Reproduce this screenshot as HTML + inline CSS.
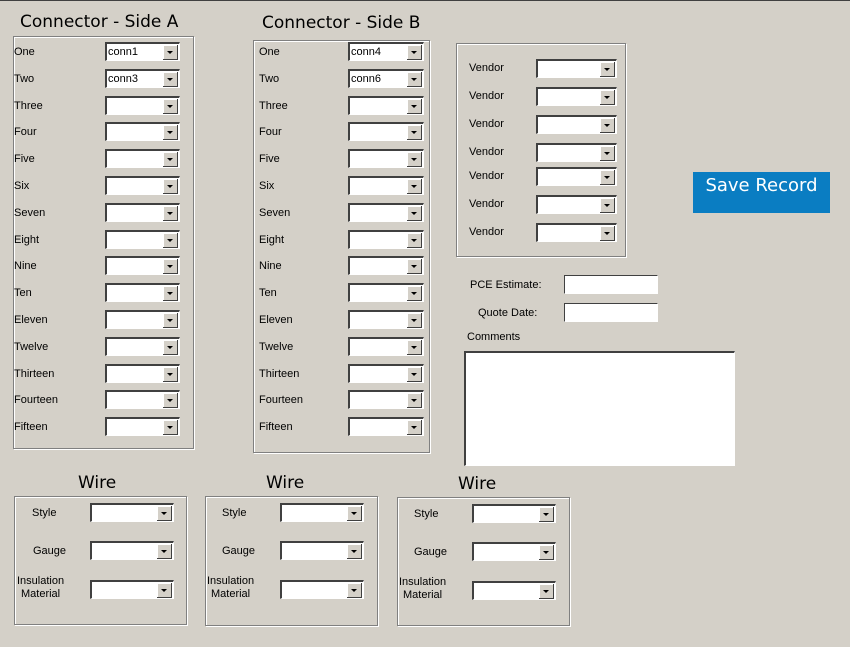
<!DOCTYPE html>
<html><head><style>
body{margin:0;width:850px;height:647px;background:#d4d0c8;position:relative;overflow:hidden;font-family:"Liberation Sans",sans-serif;font-size:11px;color:#000}
.top{position:absolute;left:0;top:0;width:850px;height:1px;background:#404040}
.g{position:absolute;border:1px solid #808080;box-shadow:inset 1px 1px 0 #fff,1px 1px 0 #fff}
.t{position:absolute;font-size:17px;white-space:nowrap;font-family:"DejaVu Sans",sans-serif}
.l{position:absolute;white-space:nowrap;font-size:11px;margin-top:1px}
.c{position:absolute;height:16px;background:#fff;border-top:2px solid #404040;border-left:2px solid #404040;border-right:1px solid #fff;border-bottom:1px solid #fff;box-sizing:content-box;font-size:11px;line-height:16px;padding-left:1px}
.c::after{content:"";position:absolute;right:1px;top:1px;width:14px;height:14px;background:#d4d0c8;border-right:1px solid #404040;border-bottom:1px solid #404040;box-shadow:inset 1px 1px 0 #fff}
.c::before{content:"";position:absolute;right:6px;top:7px;z-index:2;border-left:3px solid transparent;border-right:3px solid transparent;border-top:3px solid #000}
.i{position:absolute;background:#fff;border-top:1px solid #404040;border-left:1px solid #404040;border-right:1px solid #fff;border-bottom:1px solid #fff}
</style></head><body>
<div class="top"></div>
<div class="t" style="left:20px;top:12px">Connector - Side A</div>
<div class="t" style="left:262px;top:13px">Connector - Side B</div>
<div class="g" style="left:13px;top:36px;width:179px;height:411px"></div>
<div class="g" style="left:253px;top:40px;width:175px;height:411px"></div>
<div class="g" style="left:456px;top:43px;width:168px;height:212px"></div>

<div class="l" style="left:14px;top:45px">One</div><div class="c" style="left:105px;top:42px;width:71px">conn1</div>
<div class="l" style="left:14px;top:72px">Two</div><div class="c" style="left:105px;top:69px;width:71px">conn3</div>
<div class="l" style="left:14px;top:99px">Three</div><div class="c" style="left:105px;top:96px;width:71px"></div>
<div class="l" style="left:14px;top:125px">Four</div><div class="c" style="left:105px;top:122px;width:71px"></div>
<div class="l" style="left:14px;top:152px">Five</div><div class="c" style="left:105px;top:149px;width:71px"></div>
<div class="l" style="left:14px;top:179px">Six</div><div class="c" style="left:105px;top:176px;width:71px"></div>
<div class="l" style="left:14px;top:206px">Seven</div><div class="c" style="left:105px;top:203px;width:71px"></div>
<div class="l" style="left:14px;top:233px">Eight</div><div class="c" style="left:105px;top:230px;width:71px"></div>
<div class="l" style="left:14px;top:259px">Nine</div><div class="c" style="left:105px;top:256px;width:71px"></div>
<div class="l" style="left:14px;top:286px">Ten</div><div class="c" style="left:105px;top:283px;width:71px"></div>
<div class="l" style="left:14px;top:313px">Eleven</div><div class="c" style="left:105px;top:310px;width:71px"></div>
<div class="l" style="left:14px;top:340px">Twelve</div><div class="c" style="left:105px;top:337px;width:71px"></div>
<div class="l" style="left:14px;top:367px">Thirteen</div><div class="c" style="left:105px;top:364px;width:71px"></div>
<div class="l" style="left:14px;top:393px">Fourteen</div><div class="c" style="left:105px;top:390px;width:71px"></div>
<div class="l" style="left:14px;top:420px">Fifteen</div><div class="c" style="left:105px;top:417px;width:71px"></div>

<div class="l" style="left:259px;top:45px">One</div><div class="c" style="left:348px;top:42px;width:72px">conn4</div>
<div class="l" style="left:259px;top:72px">Two</div><div class="c" style="left:348px;top:69px;width:72px">conn6</div>
<div class="l" style="left:259px;top:99px">Three</div><div class="c" style="left:348px;top:96px;width:72px"></div>
<div class="l" style="left:259px;top:125px">Four</div><div class="c" style="left:348px;top:122px;width:72px"></div>
<div class="l" style="left:259px;top:152px">Five</div><div class="c" style="left:348px;top:149px;width:72px"></div>
<div class="l" style="left:259px;top:179px">Six</div><div class="c" style="left:348px;top:176px;width:72px"></div>
<div class="l" style="left:259px;top:206px">Seven</div><div class="c" style="left:348px;top:203px;width:72px"></div>
<div class="l" style="left:259px;top:233px">Eight</div><div class="c" style="left:348px;top:230px;width:72px"></div>
<div class="l" style="left:259px;top:259px">Nine</div><div class="c" style="left:348px;top:256px;width:72px"></div>
<div class="l" style="left:259px;top:286px">Ten</div><div class="c" style="left:348px;top:283px;width:72px"></div>
<div class="l" style="left:259px;top:313px">Eleven</div><div class="c" style="left:348px;top:310px;width:72px"></div>
<div class="l" style="left:259px;top:340px">Twelve</div><div class="c" style="left:348px;top:337px;width:72px"></div>
<div class="l" style="left:259px;top:367px">Thirteen</div><div class="c" style="left:348px;top:364px;width:72px"></div>
<div class="l" style="left:259px;top:393px">Fourteen</div><div class="c" style="left:348px;top:390px;width:72px"></div>
<div class="l" style="left:259px;top:420px">Fifteen</div><div class="c" style="left:348px;top:417px;width:72px"></div>

<div class="l" style="left:469px;top:61px">Vendor</div><div class="c" style="left:536px;top:59px;width:77px"></div>
<div class="l" style="left:469px;top:89px">Vendor</div><div class="c" style="left:536px;top:87px;width:77px"></div>
<div class="l" style="left:469px;top:117px">Vendor</div><div class="c" style="left:536px;top:115px;width:77px"></div>
<div class="l" style="left:469px;top:145px">Vendor</div><div class="c" style="left:536px;top:143px;width:77px"></div>
<div class="l" style="left:469px;top:169px">Vendor</div><div class="c" style="left:536px;top:167px;width:77px"></div>
<div class="l" style="left:469px;top:197px">Vendor</div><div class="c" style="left:536px;top:195px;width:77px"></div>
<div class="l" style="left:469px;top:225px">Vendor</div><div class="c" style="left:536px;top:223px;width:77px"></div>

<div style="position:absolute;left:693px;top:172px;width:137px;height:41px;background:#0a7dc2;color:#fff;font-size:18px;text-align:center;line-height:28px;font-family:'DejaVu Sans',sans-serif">Save Record</div>

<div class="l" style="left:470px;top:278px">PCE Estimate:</div><div class="i" style="left:564px;top:275px;width:92px;height:17px"></div>
<div class="l" style="left:478px;top:306px">Quote Date:</div><div class="i" style="left:564px;top:303px;width:92px;height:17px"></div>
<div class="l" style="left:467px;top:330px">Comments</div>
<div class="i" style="left:464px;top:351px;width:268px;height:112px;border-top:2px solid #404040;border-left:2px solid #404040"></div>

<div class="t" style="left:78px;top:473px">Wire</div>
<div class="t" style="left:266px;top:473px">Wire</div>
<div class="t" style="left:458px;top:474px">Wire</div>
<div class="g" style="left:14px;top:496px;width:171px;height:127px"></div>
<div class="g" style="left:205px;top:496px;width:171px;height:128px"></div>
<div class="g" style="left:397px;top:497px;width:171px;height:127px"></div>

<div class="l" style="left:32px;top:506px">Style</div><div class="c" style="left:90px;top:503px;width:80px"></div>
<div class="l" style="left:33px;top:544px">Gauge</div><div class="c" style="left:90px;top:541px;width:80px"></div>
<div class="l" style="left:17px;top:574px;text-align:center;line-height:13px">Insulation<br>Material</div><div class="c" style="left:90px;top:580px;width:80px"></div>

<div class="l" style="left:222px;top:506px">Style</div><div class="c" style="left:280px;top:503px;width:80px"></div>
<div class="l" style="left:222px;top:544px">Gauge</div><div class="c" style="left:280px;top:541px;width:80px"></div>
<div class="l" style="left:207px;top:574px;text-align:center;line-height:13px">Insulation<br>Material</div><div class="c" style="left:280px;top:580px;width:80px"></div>

<div class="l" style="left:414px;top:507px">Style</div><div class="c" style="left:472px;top:504px;width:80px"></div>
<div class="l" style="left:414px;top:545px">Gauge</div><div class="c" style="left:472px;top:542px;width:80px"></div>
<div class="l" style="left:399px;top:575px;text-align:center;line-height:13px">Insulation<br>Material</div><div class="c" style="left:472px;top:581px;width:80px"></div>
</body></html>
